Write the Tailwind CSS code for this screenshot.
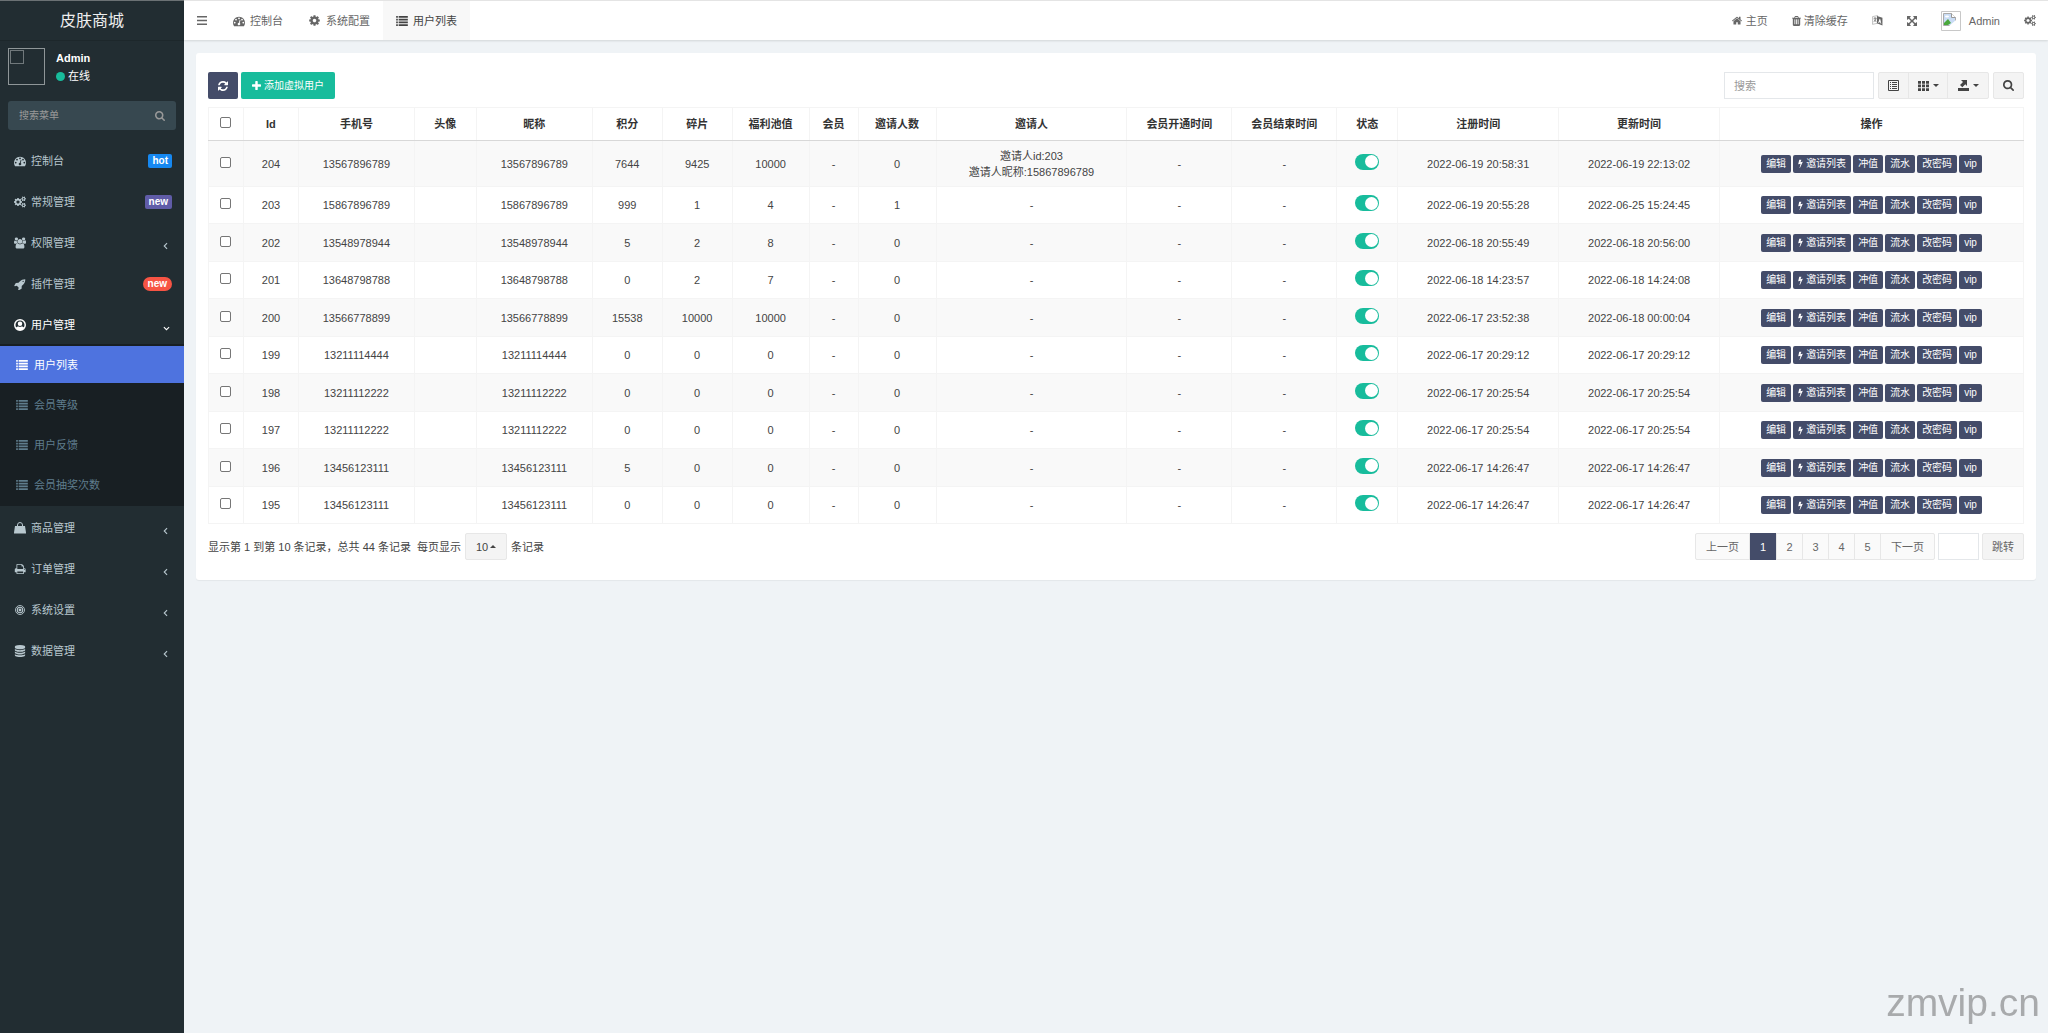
<!DOCTYPE html>
<html lang="zh-CN">
<head>
<meta charset="utf-8">
<title>皮肤商城</title>
<script src="https://cdn.jsdelivr.net/npm/@tailwindcss/browser@4"></script>
</head>
<body class="flex min-h-screen bg-[#eff3f6] font-['Liberation_Sans','Noto_Sans_CJK_SC',sans-serif] text-[11px] leading-4 text-[#444]">

<svg class="hidden">
  <symbol id="dashboard" viewBox="0 0 1792 1792"><path d="M384 1152q0-53-37.5-90.5t-90.5-37.5-90.5 37.5-37.5 90.5 37.5 90.5 90.5 37.5 90.5-37.5 37.5-90.5zm192-448q0-53-37.5-90.5t-90.5-37.5-90.5 37.5-37.5 90.5 37.5 90.5 90.5 37.5 90.5-37.5 37.5-90.5zm428 481l101-382q6-26-7.5-48.5t-38.5-29.5-48 6.5-30 39.5l-101 382q-60 5-107 43.5t-63 98.5q-20 77 20 146t117 89 146-20 89-117q16-60-6-117t-72-91zm660-33q0-53-37.5-90.5t-90.5-37.5-90.5 37.5-37.5 90.5 37.5 90.5 90.5 37.5 90.5-37.5 37.5-90.5zm-640-640q0-53-37.5-90.5t-90.5-37.5-90.5 37.5-37.5 90.5 37.5 90.5 90.5 37.5 90.5-37.5 37.5-90.5zm448 192q0-53-37.5-90.5t-90.5-37.5-90.5 37.5-37.5 90.5 37.5 90.5 90.5 37.5 90.5-37.5 37.5-90.5zm320 448q0 261-141 483-19 29-54 29h-1402q-35 0-54-29-141-221-141-483 0-182 71-348t191-286 286-191 348-71 348 71 286 191 191 286 71 348z"/></symbol>
  <symbol id="cog" viewBox="100 100 1592 1592"><path d="M1152 896q0-106-75-181t-181-75-181 75-75 181 75 181 181 75 181-75 75-181zm512-109v222q0 12-8 23t-20 13l-185 28q-19 54-39 91 35 50 107 138 10 12 10 25t-9 23q-27 37-99 108t-94 71q-12 0-26-9l-138-108q-44 23-91 38-16 136-29 186-7 28-36 28h-222q-14 0-24.5-8.5t-11.5-21.5l-28-184q-49-16-90-37l-141 107q-10 9-25 9-14 0-25-11-126-114-165-168-7-10-7-23 0-12 8-23 15-21 51-66.5t54-70.5q-27-50-41-99l-183-27q-13-2-21-12.5t-8-23.5v-222q0-12 8-23t19-13l186-28q14-46 39-92-40-57-107-138-10-12-10-24 0-10 9-23 26-36 98.5-107.5t94.5-71.5q13 0 26 10l138 107q44-23 91-38 16-136 29-186 7-28 36-28h222q14 0 24.5 8.5t11.5 21.5l28 184q49 16 90 37l142-107q9-9 24-9 13 0 25 10 129 119 165 170 7 8 7 22 0 12-8 23-15 21-51 66.5t-54 70.5q26 50 41 98l183 28q13 2 21 12.5t8 23.5z"/></symbol>
  <symbol id="cogs" viewBox="0 0 1920 1792"><path d="M896 896q0-106-75-181t-181-75-181 75-75 181 75 181 181 75 181-75 75-181zm768 512q0-52-38-90t-90-38-90 38-38 90q0 53 37.5 90.5t90.5 37.5 90.5-37.5 37.5-90.5zm0-1024q0-52-38-90t-90-38-90 38-38 90q0 53 37.5 90.5t90.5 37.5 90.5-37.5 37.5-90.5zm-384 421v185q0 10-7 19.5t-16 10.5l-155 24q-11 35-32 76 34 48 90 115 7 11 7 20 0 12-7 19-23 30-82.5 89.5t-78.5 59.5q-11 0-21-7l-115-90q-37 19-77 31-11 108-23 155-7 24-30 24h-186q-11 0-20-7.5t-10-17.5l-23-153q-34-10-75-31l-118 89q-7 7-20 7-11 0-21-8-144-133-144-160 0-9 7-19 10-14 41-53t47-61q-23-44-35-82l-152-24q-10-1-17-9.5t-7-19.5v-185q0-10 7-19.5t16-10.5l155-24q11-35 32-76-34-48-90-115-7-11-7-20 0-12 7-20 22-30 82-89t79-59q11 0 21 7l115 90q34-18 77-32 11-108 23-154 7-24 30-24h186q11 0 20 7.5t10 17.5l23 153q34 10 75 31l118-89q8-7 20-7 11 0 21 8 144 133 144 160 0 8-7 19-12 16-42 54t-45 60q23 48 34 82l152 23q10 2 17 10.5t7 19.5zm640 533v140q0 16-149 31-12 27-30 52 51 113 51 138 0 4-4 7-122 71-124 71-8 0-46-47t-52-68q-20 2-30 2t-30-2q-14 21-52 68t-46 47q-2 0-124-71-4-3-4-7 0-25 51-138-18-25-30-52-149-15-149-31v-140q0-16 149-31 13-29 30-52-51-113-51-138 0-4 4-7 4-2 35-20t59-34 30-16q8 0 46 46.5t52 67.5q20-2 30-2t30 2q51-71 92-112l6-2q4 0 124 70 4 3 4 7 0 25-51 138 17 23 30 52 149 15 149 31zm0-1024v140q0 16-149 31-12 27-30 52 51 113 51 138 0 4-4 7-122 71-124 71-8 0-46-47t-52-68q-20 2-30 2t-30-2q-14 21-52 68t-46 47q-2 0-124-71-4-3-4-7 0-25 51-138-18-25-30-52-149-15-149-31v-140q0-16 149-31 13-29 30-52-51-113-51-138 0-4 4-7 4-2 35-20t59-34 30-16q8 0 46 46.5t52 67.5q20-2 30-2t30 2q51-71 92-112l6-2q4 0 124 70 4 3 4 7 0 25-51 138 17 23 30 52 149 15 149 31z"/></symbol>
  <symbol id="users" viewBox="0 0 1920 1792"><path d="M593 896q-162 5-265 128h-134q-82 0-138-40.5t-56-118.5q0-353 124-353 6 0 43.5 21t97.5 42.5 119 21.5q67 0 133-23-5 37-5 66 0 159 93 293zm1071 637q0 120-73 189.5t-194 69.5h-874q-121 0-194-69.5t-73-189.5q0-53 3.5-103.5t14-109 26.5-108.5 43-97.5 62-81 85.5-53.5 111.5-20q10 0 43 21.5t73 48 107 48 135 21.5 135-21.5 107-48 73-48 43-21.5q61 0 111.5 20t85.5 53.5 62 81 43 97.5 26.5 108.5 14 109 3.5 103.5zm-1024-1277q0 106-75 181t-181 75-181-75-75-181 75-181 181-75 181 75 75 181zm704 384q0 159-112.5 271.5t-271.5 112.5-271.5-112.5-112.5-271.5 112.5-271.5 271.5-112.5 271.5 112.5 112.5 271.5zm576 225q0 78-56 118.5t-138 40.5h-134q-103-123-265-128 93-134 93-293 0-29-5-66 66 23 133 23 59 0 119-21.5t97.5-42.5 43.5-21q124 0 124 353zm-128-609q0 106-75 181t-181 75-181-75-75-181 75-181 181-75 181 75 75 181z"/></symbol>
  <symbol id="rocket" viewBox="64 96 1632 1632"><path d="M1440 448q0-40-28-68t-68-28-68 28-28 68 28 68 68 28 68-28 28-68zm224-288q0 249-75.5 430.5t-253.5 360.5q-81 80-195 176l-20 379q-2 16-16 26l-384 224q-7 4-16 4-12 0-23-9l-64-64q-13-14-8-32l85-276-281-281-276 85q-3 1-9 1-14 0-23-9l-64-64q-17-19-5-39l224-384q10-14 26-16l379-20q96-114 176-195 188-187 358-258t431-71q14 0 24 9.5t10 22.5z"/></symbol>
  <symbol id="user" viewBox="0 0 24 24"><circle cx="12" cy="12" r="10.500" fill="none" stroke="currentColor" stroke-width="3"/><circle cx="12" cy="9.500" r="4.500"/><path d="M3.500 18c1.500-2.500 4-3 5.500-3q3 1.800 6 0c1.500 0 4 .5 5.500 3l-4 4h-9z"/></symbol>
  <symbol id="list" viewBox="0 0 14 12"><path d="M0 0h2v2H0zM3 0h11v2H3zM0 3.300h2v2H0zM3 3.300h11v2H3zM0 6.600h2v2H0zM3 6.600h11v2H3zM0 9.900h2v2H0zM3 9.900h11v2H3z"/></symbol>
  <symbol id="bag" viewBox="0 0 24 24"><path d="M2 8h20l2 13v2H0v-2z"/><path d="M7 12V6a5 5 0 0 1 10 0v6" fill="none" stroke="currentColor" stroke-width="2"/></symbol>
  <symbol id="print" viewBox="0 128 1728 1536"><path d="M448 1536h896v-256h-896v256zm0-640h896v-384h-160q-40 0-68-28t-28-68v-160h-640v640zm1152 64q0-26-19-45t-45-19-45 19-19 45 19 45 45 19 45-19 19-45zm128 0v416q0 13-9.500 22.500t-22.500 9.500h-224v160q0 40-28 68t-68 28h-960q-40 0-68-28t-28-68v-160h-224q-13 0-22.500-9.500t-9.500-22.500v-416q0-79 56.500-135.500t135.500-56.500h64v-544q0-40 28-68t68-28h672q40 0 88 20t76 48l152 152q28 28 48 76t20 88v256h64q79 0 135.500 56.500t56.500 135.500z"/></symbol>
  <symbol id="target" viewBox="0 0 24 24"><g fill="none" stroke="currentColor"><circle cx="12" cy="12" r="10.800" stroke-width="2.200"/><circle cx="12" cy="12" r="6.500" stroke-width="2.500"/></g><circle cx="12" cy="12" r="3.500"/></symbol>
  <symbol id="database" viewBox="128 0 1536 1792"><path d="M896 768q237 0 443-43t325-127v170q0 69-103 128t-280 93.500-385 34.500-385-34.500-280-93.500-103-128v-170q119 84 325 127t443 43zm0 768q237 0 443-43t325-127v170q0 69-103 128t-280 93.500-385 34.500-385-34.500-280-93.500-103-128v-170q119 84 325 127t443 43zm0-384q237 0 443-43t325-127v170q0 69-103 128t-280 93.500-385 34.500-385-34.500-280-93.500-103-128v-170q119 84 325 127t443 43zm0-1152q208 0 385 34.500t280 93.500 103 128v128q0 69-103 128t-280 93.500-385 34.500-385-34.500-280-93.500-103-128v-128q0-69 103-128t280-93.500 385-34.500z"/></symbol>
  <symbol id="left" viewBox="0 0 8 12"><path d="M6.500 1.500 2 6l4.500 4.500" fill="none" stroke="currentColor" stroke-width="1.800"/></symbol>
  <symbol id="down" viewBox="0 0 12 8"><path d="M1.500 1.500 6 6l4.500-4.500" fill="none" stroke="currentColor" stroke-width="1.800"/></symbol>
  <symbol id="bars" viewBox="0 0 10 9"><path d="M0 0h10v1.500H0zM0 3.700h10v1.500H0zM0 7.400h10v1.500H0z"/></symbol>
  <symbol id="search" viewBox="64 128 1664 1664"><path d="M1216 832q0-185-131.500-316.500t-316.500-131.500-316.500 131.500-131.500 316.500 131.500 316.500 316.500 131.500 316.500-131.500 131.500-316.500zm512 832q0 52-38 90t-90 38q-54 0-90-38l-343-342q-179 124-399 124-143 0-273.500-55.500t-225-150-150-225-55.500-273.500 55.500-273.500 150-225 225-150 273.500-55.500 273.500 55.500 225 150 150 225 55.500 273.500q0 220-124 399l343 343q37 37 37 90z"/></symbol>
  <symbol id="refresh" viewBox="128 128 1536 1536"><path d="M1639 1056q0 5-1 7-64 268-268 434.500t-478 166.500q-146 0-282.500-55t-243.500-157l-129 129q-19 19-45 19t-45-19-19-45v-448q0-26 19-45t45-19h448q26 0 45 19t19 45-19 45l-137 137q71 66 161 102t187 36q134 0 250-65t186-179q11-17 53-117 8-23 30-23h192q13 0 22.500 9.500t9.500 22.500zm25-800v448q0 26-19 45t-45 19h-448q-26 0-45-19t-19-45 19-45l138-138q-148-137-349-137-134 0-250 65t-186 179q-11 17-53 117-8 23-30 23h-199q-13 0-22.500-9.500t-9.500-22.500v-7q65-268 270-434.500t480-166.500q146 0 284 55.500t245 156.500l130-129q19-19 45-19t45 19 19 45z"/></symbol>
  <symbol id="plus" viewBox="192 128 1408 1408"><path d="M1600 736v192q0 40-28 68t-68 28h-416v416q0 40-28 68t-68 28h-192q-40 0-68-28t-28-68v-416h-416q-40 0-68-28t-28-68v-192q0-40 28-68t68-28h416v-416q0-40 28-68t68-28h192q40 0 68 28t28 68v416h416q40 0 68 28t28 68z"/></symbol>
  <symbol id="home" viewBox="80 200 1632 1336"><path d="M1472 992v480q0 26-19 45t-45 19h-384v-384h-256v384h-384q-26 0-45-19t-19-45v-480q0-1 .5-3t.5-3l575-474 575 474q1 2 1 6zm223-69l-62 74q-8 9-21 11h-3q-13 0-21-7l-692-577-692 577q-12 8-24 7-13-2-21-11l-62-74q-8-10-7-23.500t11-21.500l719-599q32-26 76-26t76 26l244 204v-195q0-14 9-23t23-9h192q14 0 23 9t9 23v408l219 182q10 8 11 21.500t-7 23.500z"/></symbol>
  <symbol id="trash" viewBox="192 128 1408 1536"><path d="M704 1376v-704q0-14-9-23t-23-9h-64q-14 0-23 9t-9 23v704q0 14 9 23t23 9h64q14 0 23-9t9-23zm256 0v-704q0-14-9-23t-23-9h-64q-14 0-23 9t-9 23v704q0 14 9 23t23 9h64q14 0 23-9t9-23zm256 0v-704q0-14-9-23t-23-9h-64q-14 0-23 9t-9 23v704q0 14 9 23t23 9h64q14 0 23-9t9-23zm-544-992h448l-48-117q-7-9-17-11h-317q-10 2-17 11zm928 32v64q0 14-9 23t-23 9h-96v948q0 83-47 143.500t-113 60.500h-832q-66 0-113-58.500t-47-141.500v-952h-96q-14 0-23-9t-9-23v-64q0-14 9-23t23-9h309l70-167q15-37 54-63t79-26h320q40 0 79 26t54 63l70 167h309q14 0 23 9t9 23z"/></symbol>
  <symbol id="language" viewBox="0 0 20 20"><path d="M1 3l9-2v14L1 17z" fill="none" stroke="currentColor" stroke-opacity=".6" stroke-width="1.200"/><path d="M3 6h5M5.500 4v2M7.500 6q-1 5-4.500 6M4 8q1 3 4 4" fill="none" stroke="currentColor" stroke-width="1.400"/><path fill-rule="evenodd" d="M9 2l10 3v14L9 15zM13.800 7l-2.500 7 1.300.5.5-1.500 2 .7.500 1.800 1.400.5L15.100 7.500z"/></symbol>
  <symbol id="expand" viewBox="128 128 1536 1536"><path d="M1411 541l-355 355 355 355 144-144q29-31 70-14 39 17 39 59v448q0 26-19 45t-45 19h-448q-42 0-59-40-17-39 14-69l144-144-355-355-355 355 144 144q31 30 14 69-17 40-59 40h-448q-26 0-45-19t-19-45v-448q0-42 40-59 39-17 69 14l144 144 355-355-355-355-144 144q-19 19-45 19-12 0-24-5-40-17-40-59v-448q0-26 19-45t45-19h448q42 0 59 40 17 39-14 69l-144 144 355 355 355-355-144-144q-31-30-14-69 17-40 59-40h448q26 0 45 19t19 45v448q0 42-39 59-13 5-25 5-26 0-45-19z"/></symbol>
  <symbol id="bolt" viewBox="448 0 896 1792"><path d="M1333 566q18 20 7 44l-540 1157q-13 25-42 25-4 0-14-2-17-5-25.500-19t-4.500-30l197-808-406 101q-4 1-12 1-18 0-31-11-18-15-13-39l201-825q4-14 16-23t28-9h328q19 0 32 12.500t13 29.500q0 8-5 18l-171 463 396-98q8-2 12-2 19 0 34 15z"/></symbol>
  <symbol id="detail" viewBox="0 0 11 11"><path d="M.5.500h10v10H.5z" fill="none" stroke="currentColor"/><path d="M2 2h1v1H2zM4 2h5v1H4zM2 4h1v1H2zM4 4h5v1H4zM2 6h1v1H2zM4 6h5v1H4zM2 8h1v1H2zM4 8h5v1H4z"/></symbol>
  <symbol id="grid" viewBox="0 0 11 10"><path d="M0 0h3v2.700H0zM4 0h3v2.700H4zM8 0h3v2.700H8zM0 3.600h3v2.700H0zM4 3.600h3v2.700H4zM8 3.600h3v2.700H8zM0 7.200h3v2.700H0zM4 7.200h3v2.700H4zM8 7.200h3v2.700H8z"/></symbol>
  <symbol id="export" viewBox="0 0 11 11"><path d="M0 8h11v3H0zM3 0h6v6L7.300 4.300 4.300 7.300 2 5l3-3z"/></symbol>
  <symbol id="caret" viewBox="0 0 8 4"><path d="M0 0h8L4 4z"/></symbol>
  <symbol id="caretup" viewBox="0 0 8 4"><path d="M0 4h8L4 0z"/></symbol>
</svg>

<aside class="w-[184px] shrink-0 border-t border-[#6b7174] bg-[#222d32] text-[#b8c7ce]">
  <a href="#" class="flex h-10 items-center justify-center border-b border-[#1d272b] text-base text-[#eee]">皮肤商城</a>
  <div class="flex gap-[11px] px-2 pt-[7px]">
    <div class="size-[37px] border border-[#8f9698] p-px"><div class="size-[14px] border border-[#70787b]"></div></div>
    <div class="pt-[2px] text-white">
      <p class="font-bold">Admin</p>
      <p class="mt-[2px] flex items-center gap-[3px]"><span class="size-[9px] rounded-full bg-[#18bc9c]"></span>在线</p>
    </div>
  </div>
  <form class="mx-2 mt-4 flex h-[29px] items-center rounded-[3px] bg-[#374850] px-[11px]">
    <input type="text" aria-label="搜索菜单" placeholder="搜索菜单" class="min-w-0 flex-1 bg-transparent text-[10px] outline-none placeholder:text-[#999]">
    <button type="button" aria-label="搜索" class="text-[#999]"><svg class="size-[10px] fill-current"><use href="#search"/></svg></button>
  </form>
  <nav class="mt-3 flex flex-col gap-[3px]">
    <a href="#" class="flex h-[38px] items-center gap-[5px] pl-[14px] pr-3"><svg class="size-3 fill-current"><use href="#dashboard"/></svg>控制台<span class="ml-auto rounded-[2px] bg-[#1688f1] px-1 text-[10px] font-bold leading-[14px] text-white">hot</span></a>
    <a href="#" class="flex h-[38px] items-center gap-[5px] pl-[14px] pr-3"><svg class="size-3 fill-current"><use href="#cogs"/></svg>常规管理<span class="ml-auto rounded-[2px] bg-[#605ca8] px-1 text-[10px] font-bold leading-[14px] text-white">new</span></a>
    <a href="#" class="flex h-[38px] items-center gap-[5px] pl-[14px] pr-4"><svg class="size-3 fill-current"><use href="#users"/></svg>权限管理<svg class="ml-auto mt-[6px] h-2 w-[5px]"><use href="#left"/></svg></a>
    <a href="#" class="flex h-[38px] items-center gap-[5px] pl-[14px] pr-3"><svg class="h-[11px] w-3 fill-current"><use href="#rocket"/></svg>插件管理<span class="ml-auto rounded-full bg-[#f75444] px-[5px] text-[10px] font-bold leading-[14px] text-white">new</span></a>
    <div>
      <a href="#" class="flex h-[38px] items-center gap-[5px] pl-[14px] pr-[14px] text-white"><svg class="size-3 fill-current"><use href="#user"/></svg>用户管理<svg class="ml-auto mt-[6px] h-[5px] w-[7px]"><use href="#down"/></svg></a>
      <div class="flex flex-col gap-[3px] bg-[#181f23] pt-[2px] pb-[3px] text-[#5f7d8d]">
        <a href="#" class="flex h-[37px] items-center gap-[6px] bg-[#4e73df] pl-4 text-white"><svg class="h-[10px] w-3 fill-current"><use href="#list"/></svg>用户列表</a>
        <a href="#" class="flex h-[37px] items-center gap-[6px] pl-4"><svg class="h-[10px] w-3 fill-current"><use href="#list"/></svg>会员等级</a>
        <a href="#" class="flex h-[37px] items-center gap-[6px] pl-4"><svg class="h-[10px] w-3 fill-current"><use href="#list"/></svg>用户反馈</a>
        <a href="#" class="flex h-[37px] items-center gap-[6px] pl-4"><svg class="h-[10px] w-3 fill-current"><use href="#list"/></svg>会员抽奖次数</a>
      </div>
    </div>
    <a href="#" class="flex h-[38px] items-center gap-[5px] pl-[14px] pr-4"><svg class="size-3 fill-current"><use href="#bag"/></svg>商品管理<svg class="ml-auto mt-[6px] h-2 w-[5px]"><use href="#left"/></svg></a>
    <a href="#" class="flex h-[38px] items-center gap-[5px] pl-[14px] pr-4"><svg class="h-[10px] w-3 fill-current"><use href="#print"/></svg>订单管理<svg class="ml-auto mt-[6px] h-2 w-[5px]"><use href="#left"/></svg></a>
    <a href="#" class="flex h-[38px] items-center gap-[5px] pl-[14px] pr-4"><svg class="h-[10px] w-3 fill-current"><use href="#target"/></svg>系统设置<svg class="ml-auto mt-[6px] h-2 w-[5px]"><use href="#left"/></svg></a>
    <a href="#" class="flex h-[38px] items-center gap-[5px] pl-[14px] pr-4"><svg class="size-3 fill-current"><use href="#database"/></svg>数据管理<svg class="ml-auto mt-[6px] h-2 w-[5px]"><use href="#left"/></svg></a>
  </nav>
</aside>

<div class="min-w-0 flex-1">
  <header class="flex h-10 items-stretch border-t border-[#e4e4e4] bg-white text-[#666] shadow-[0_1px_2px_rgba(0,0,0,0.12)]">
    <button type="button" aria-label="菜单" class="px-[13px]"><svg class="h-[9px] w-[10px] fill-current"><use href="#bars"/></svg></button>
    <nav class="flex">
      <a href="#" class="flex items-center gap-[5px] px-[13px]"><svg class="size-3 fill-current"><use href="#dashboard"/></svg>控制台</a>
      <a href="#" class="flex items-center gap-[6px] px-[13px]"><svg class="size-[11px] fill-current"><use href="#cog"/></svg>系统配置</a>
      <a href="#" class="flex items-center gap-[5px] bg-[#f8f8f8] px-[13px] text-[#444]"><svg class="h-[10px] w-3 fill-current"><use href="#list"/></svg>用户列表</a>
    </nav>
    <div class="ml-auto flex">
      <a href="#" class="flex items-center gap-1 px-3"><svg class="h-[9px] w-[10px] fill-current"><use href="#home"/></svg>主页</a>
      <a href="#" class="flex items-center gap-[3px] px-3"><svg class="h-[10px] w-[9px] fill-current"><use href="#trash"/></svg>清除缓存</a>
      <button type="button" aria-label="语言" class="px-3"><svg class="size-[11px] fill-current"><use href="#language"/></svg></button>
      <button type="button" aria-label="全屏" class="px-3"><svg class="size-[10px] fill-current"><use href="#expand"/></svg></button>
      <a href="#" class="flex items-center gap-2 px-3">
        <svg class="size-5" viewBox="0 0 20 20"><path d="M.5.500h19v19H.5z" fill="#fff" stroke="#c8c8c8"/><path d="M2.500 2.500h8l4 4v8h-12z" fill="#c9dcf5" stroke="#aaa"/><path d="M10.500 2.500v4h4" fill="#fff" stroke="#999"/><path d="M3 14v-2l4-4 3 4-3 2z" fill="#4aa83c"/><path d="M8 15l7-6v6z" fill="#fff"/><ellipse cx="6" cy="5.500" rx="2" ry="1" fill="#fff"/></svg>Admin</a>
      <button type="button" aria-label="设置" class="px-3"><svg class="h-[11px] w-3 fill-current"><use href="#cogs"/></svg></button>
    </div>
  </header>

  <main class="mx-3 mt-[13px] rounded-[3px] bg-white px-3 pt-[19px] pb-5 shadow-[0_1px_1px_rgba(0,0,0,0.05)]">
    <div class="mb-2 flex h-[27px] items-stretch">
      <button type="button" aria-label="刷新" class="mr-[3px] flex w-[30px] items-center justify-center rounded-[2px] bg-[#444c69] text-white"><svg class="size-[10px] fill-current"><use href="#refresh"/></svg></button>
      <button type="button" class="flex items-center gap-[3px] rounded-[2px] bg-[#18bc9c] px-[11px] text-[10px] text-white"><svg class="size-[9px] fill-current"><use href="#plus"/></svg>添加虚拟用户</button>
      <input type="text" aria-label="搜索" placeholder="搜索" class="ml-auto mr-1 w-[150px] border border-[#e4e7ea] px-[9px] outline-none placeholder:text-[#999]">
      <div class="mr-1 flex divide-x divide-[#e7e7e7] rounded-[2px] border border-[#e7e7e7] bg-[#f4f4f4]">
        <button type="button" aria-label="切换" class="flex w-[30px] items-center justify-center"><svg class="size-[11px] fill-current"><use href="#detail"/></svg></button>
        <button type="button" aria-label="列" class="flex w-[39px] items-center justify-center gap-1"><svg class="h-[10px] w-[11px] fill-current"><use href="#grid"/></svg><svg class="h-[3px] w-[6px] fill-current"><use href="#caret"/></svg></button>
        <button type="button" aria-label="导出" class="flex w-10 items-center justify-center gap-1"><svg class="size-[11px] fill-current"><use href="#export"/></svg><svg class="h-[3px] w-[6px] fill-current"><use href="#caret"/></svg></button>
      </div>
      <button type="button" aria-label="普通搜索" class="flex w-[31px] items-center justify-center rounded-[2px] border border-[#e7e7e7] bg-[#f4f4f4]"><svg class="size-[11px] fill-current"><use href="#search"/></svg></button>
    </div>

    <table class="w-full table-fixed border-collapse text-center">
      <colgroup id="cols"></colgroup>
      <thead class="text-[#333]"><tr id="head" class="h-[33px]"></tr></thead>
      <tbody id="rows"></tbody>
    </table>

    <div class="mt-[9px] flex h-[27px] items-center">
      <span>显示第 1 到第 10 条记录，总共 44 条记录</span>
      <label for="size" class="ml-[6px]">每页显示</label>
      <div class="mx-1 grid h-[27px] w-[42px] items-center rounded-[2px] border border-[#e7e7e7] bg-[#f4f4f4]">
        <select id="size" class="col-start-1 row-start-1 h-full appearance-none bg-transparent pl-[10px] outline-none"><option>10</option><option>25</option><option>50</option></select>
        <svg class="pointer-events-none col-start-1 row-start-1 mr-[10px] h-[3px] w-[6px] justify-self-end fill-current"><use href="#caretup"/></svg>
      </div>
      <span>条记录</span>
      <nav class="ml-auto flex h-[27px] divide-x divide-[#e7e7e7] rounded-[2px] border border-[#e7e7e7] bg-[#fafafa] text-[#666]">
        <a href="#" class="flex items-center px-[10px]">上一页</a>
        <a href="#" class="-my-px flex w-[27px] items-center justify-center bg-[#444c69] text-white">1</a>
        <a href="#" class="flex w-[26px] items-center justify-center">2</a>
        <a href="#" class="flex w-[26px] items-center justify-center">3</a>
        <a href="#" class="flex w-[26px] items-center justify-center">4</a>
        <a href="#" class="flex w-[26px] items-center justify-center">5</a>
        <a href="#" class="flex items-center px-[10px]">下一页</a>
      </nav>
      <input type="text" aria-label="页码" class="mx-[3px] h-[27px] w-[41px] border border-[#e4e7ea] px-1 outline-none">
      <button type="button" class="h-[27px] w-[42px] rounded-[2px] border border-[#e7e7e7] bg-[#f4f4f4] text-[#666]">跳转</button>
    </div>
  </main>
</div>

<p class="pointer-events-none fixed right-2 bottom-2 text-[39px] leading-[44px] text-[#a8aaac]">zmvip.cn</p>

<script>
const columns = [['',35],['Id',55],['手机号',116],['头像',62],['昵称',116],['积分',70],['碎片',70],['福利池值',77],['会员',49],['邀请人数',78],['邀请人',191],['会员开通时间',105],['会员结束时间',105],['状态',61],['注册时间',161],['更新时间',161],['操作',304]];
const total = columns.reduce((sum, c) => sum + c[1], 0);
const users = [
  [204,'13567896789',7644,9425,10000,0,'邀请人id:203<br>邀请人昵称:15867896789','2022-06-19 20:58:31','2022-06-19 22:13:02'],
  [203,'15867896789',999,1,4,1,'-','2022-06-19 20:55:28','2022-06-25 15:24:45'],
  [202,'13548978944',5,2,8,0,'-','2022-06-18 20:55:49','2022-06-18 20:56:00'],
  [201,'13648798788',0,2,7,0,'-','2022-06-18 14:23:57','2022-06-18 14:24:08'],
  [200,'13566778899',15538,10000,10000,0,'-','2022-06-17 23:52:38','2022-06-18 00:00:04'],
  [199,'13211114444',0,0,0,0,'-','2022-06-17 20:29:12','2022-06-17 20:29:12'],
  [198,'13211112222',0,0,0,0,'-','2022-06-17 20:25:54','2022-06-17 20:25:54'],
  [197,'13211112222',0,0,0,0,'-','2022-06-17 20:25:54','2022-06-17 20:25:54'],
  [196,'13456123111',5,0,0,0,'-','2022-06-17 14:26:47','2022-06-17 14:26:47'],
  [195,'13456123111',0,0,0,0,'-','2022-06-17 14:26:47','2022-06-17 14:26:47']
];
const check = label => `<input type="checkbox" aria-label="${label}" class="mb-1 inline-block size-[11px] appearance-none rounded-[2px] border border-[#767676] bg-white align-middle checked:bg-[#444c69]">`;
const toggle = id => `<input type="checkbox" role="switch" checked aria-label="状态 ${id}" class="mb-1 inline-flex h-4 w-6 appearance-none items-center rounded-full bg-[#18bc9c] px-px align-middle before:ml-auto before:size-[13px] before:rounded-full before:bg-white">`;
const action = (text, icon = '') => `<button type="button" class="flex h-[18px] items-center gap-[3px] rounded-[2px] bg-[#444c69] px-[5px]">${icon}${text}</button>`;
const actions = '<div class="flex justify-center gap-[2px] text-[10px] text-white">' + action('编辑') + action('邀请列表', '<svg class="h-[9px] w-[5px] fill-current"><use href="#bolt"/></svg>') + action('冲值') + action('流水') + action('改密码') + action('vip') + '</div>';
document.getElementById('cols').innerHTML = columns.map(c => `<col style="width:${c[1] / total * 100}%">`).join('');
document.getElementById('head').innerHTML = columns.map((c, i) => `<th class="border border-[#f4f4f4] border-b-[#d8d8d8] p-0 font-bold">${i ? c[0] : check('全选')}</th>`).join('');
document.getElementById('rows').innerHTML = users.map(([id, phone, points, shards, pool, invites, inviter, created, updated]) =>
  '<tr class="h-[38px] first:h-[46px] odd:bg-[#f9f9f9] even:h-[37px]">' +
  [check('选择 ' + id), id, phone, '', phone, points, shards, pool, '-', invites, inviter, '-', '-', toggle(id), created, updated, actions]
    .map(v => `<td class="border border-x-[#f4f4f4] border-y-[#f4f4f4] border-t-transparent p-0">${v}</td>`).join('') + '</tr>').join('');
</script>
</body>
</html>
